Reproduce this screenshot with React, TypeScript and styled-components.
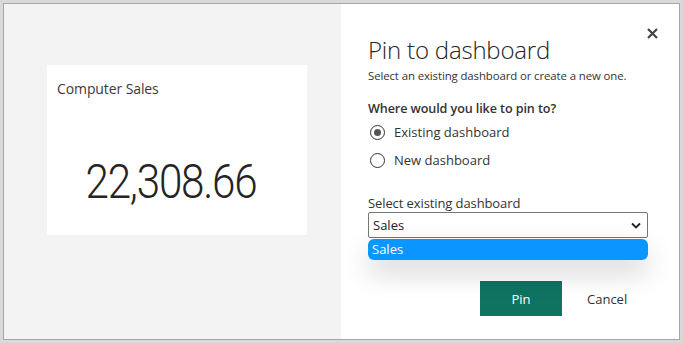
import React from "react";
import styled, { createGlobalStyle } from "styled-components";

const Global = createGlobalStyle`
  html, body { margin: 0; padding: 0; background: #d6d6d6; }
  * { box-sizing: border-box; }
`;

const Frame = styled.div`
  width: 683px;
  height: 343px;
  padding: 3px;
  background: #d9d9d9;
  font-family: "Open Sans", "Noto Sans", sans-serif;
  color: #252423;
`;

const Dialog = styled.div`
  width: 100%;
  height: 100%;
  border: 1px solid #a6a6a6;
  display: grid;
  grid-template-columns: 337px 1fr;
  overflow: hidden;
`;

const Preview = styled.div`
  background: #f3f3f3;
  padding: 61px 0 0 43px;
`;

const Card = styled.div`
  width: 260px;
  height: 170px;
  background: #ffffff;
  display: flex;
  flex-direction: column;
  padding: 14px 10px 0 10px;
`;

const CardTitle = styled.div`
  font-size: 14px;
  color: #3a3a3a;
  letter-spacing: -0.1px;
`;

const CardValue = styled.div`
  margin-top: 59px;
  text-align: center;
  font-family: "Roboto", sans-serif;
  font-weight: 300;
  font-size: 49px;
  line-height: 49px;
  color: #252423;
  letter-spacing: -1.4px;
  transform: scaleX(0.86);
  padding-right: 14px;
`;

const Panel = styled.div`
  position: relative;
  background: #ffffff;
  padding: 31px 0 0 27px;
  display: flex;
  flex-direction: column;
`;

const Close = styled.button`
  position: absolute;
  top: 22px;
  right: 20px;
  border: none;
  background: none;
  padding: 0;
  width: 14px;
  height: 14px;
  display: flex;
  align-items: center;
  justify-content: center;
`;

const Title = styled.h1`
  margin: 0;
  font-weight: 300;
  font-size: 24px;
  line-height: 30px;
  color: #252423;
  letter-spacing: -0.2px;
`;

const Subtitle = styled.div`
  margin-top: 4px;
  font-size: 11.4px;
  line-height: 14px;
  color: #333;
  letter-spacing: -0.1px;
`;

const Question = styled.div`
  margin-top: 17px;
  font-size: 12.6px;
  font-weight: 600;
  line-height: 18px;
  color: #333;
  letter-spacing: -0.1px;
`;

const RadioRow = styled.label`
  display: flex;
  align-items: center;
  gap: 9px;
  height: 28px;
  margin-left: 2px;
  font-size: 13px;
  color: #333;
  letter-spacing: 0px;
`;

const RadioCircle = styled.span<{ $checked?: boolean }>`
  width: 15px;
  height: 15px;
  border-radius: 50%;
  border: 1.5px solid #333;
  display: flex;
  align-items: center;
  justify-content: center;
  &::after {
    content: "";
    width: 7px;
    height: 7px;
    border-radius: 50%;
    background: #555;
    display: ${(p) => (p.$checked ? "block" : "none")};
  }
`;

const FieldLabel = styled.div`
  margin-top: 21px;
  font-size: 13px;
  line-height: 16px;
  color: #333;
  letter-spacing: -0.1px;
`;

const SelectWrap = styled.div`
  position: relative;
  width: 280px;
  margin-top: 1px;
`;

const SelectBox = styled.div`
  height: 26px;
  border: 1px solid #767676;
  border-radius: 2px;
  display: flex;
  align-items: center;
  justify-content: space-between;
  padding: 0 6px 0 4px;
  font-size: 13px;
  color: #222;
`;

const Popup = styled.div`
  position: absolute;
  left: 0;
  right: 0;
  top: 27px;
  padding: 0;
  border-radius: 6px;
  box-shadow: 0 12px 28px rgba(0, 0, 0, 0.18);
`;

const Option = styled.div`
  height: 21px;
  border-radius: 6px;
  background: #0a95ff;
  color: #ffffff;
  font-size: 13px;
  line-height: 20px;
  padding-left: 4px;
`;

const Actions = styled.div`
  margin-top: 43px;
  display: flex;
  align-items: center;
  padding-left: 112px;
  gap: 25px;
`;

const PinButton = styled.button`
  width: 82px;
  height: 35px;
  border: none;
  background: #0f7361;
  color: #fff;
  font-family: "Open Sans", "Noto Sans", sans-serif;
  font-size: 13px;
`;

const CancelButton = styled.button`
  border: none;
  background: none;
  padding: 0;
  color: #333;
  font-family: "Open Sans", "Noto Sans", sans-serif;
  font-size: 13px;
`;

export default function App() {
  return (
    <>
      <Global />
      <Frame>
        <Dialog>
          <Preview>
            <Card>
              <CardTitle>Computer Sales</CardTitle>
              <CardValue>22,308.66</CardValue>
            </Card>
          </Preview>
          <Panel>
            <Close aria-label="Close">
              <svg width="11" height="11" viewBox="0 0 11 11">
                <path d="M1 1L10 10M10 1L1 10" stroke="#444" strokeWidth="2.2" />
              </svg>
            </Close>
            <Title>Pin to dashboard</Title>
            <Subtitle>Select an existing dashboard or create a new one.</Subtitle>
            <Question>Where would you like to pin to?</Question>
            <RadioRow>
              <RadioCircle $checked />
              Existing dashboard
            </RadioRow>
            <RadioRow>
              <RadioCircle />
              New dashboard
            </RadioRow>
            <FieldLabel>Select existing dashboard</FieldLabel>
            <SelectWrap>
              <SelectBox>
                <span>Sales</span>
                <svg width="10" height="7" viewBox="0 0 10 7">
                  <path d="M1 1.5L5 5.5L9 1.5" stroke="#222" strokeWidth="1.8" fill="none" />
                </svg>
              </SelectBox>
              <Popup>
                <Option>Sales</Option>
              </Popup>
            </SelectWrap>
            <Actions>
              <PinButton>Pin</PinButton>
              <CancelButton>Cancel</CancelButton>
            </Actions>
          </Panel>
        </Dialog>
      </Frame>
    </>
  );
}
